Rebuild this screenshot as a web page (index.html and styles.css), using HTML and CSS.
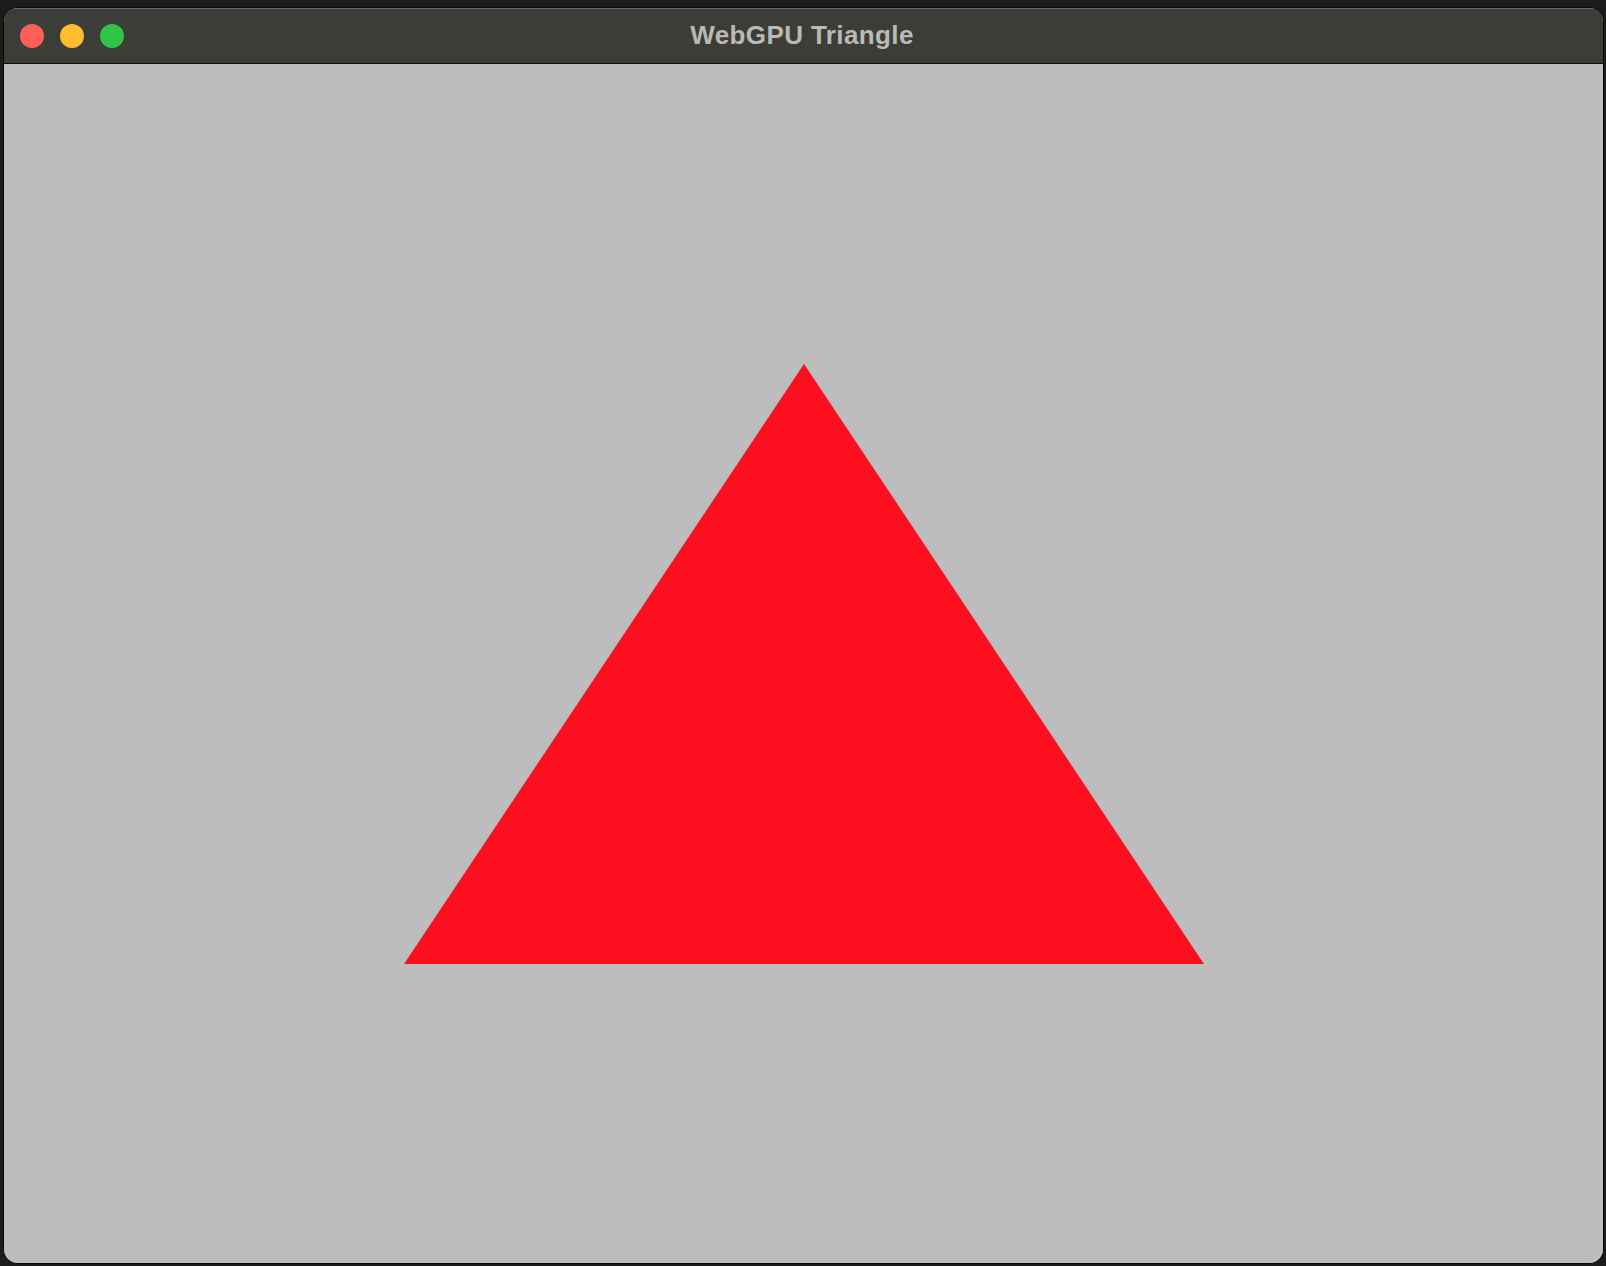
FILE: index.html
```html
<!DOCTYPE html>
<html lang="en">
<head>
<meta charset="utf-8">
<title>WebGPU Triangle</title>
<link rel="stylesheet" href="styles.css">
</head>
<body>
  <div class="window">
    <div class="titlebar">
      <div class="lights">
        <span class="light red"></span>
        <span class="light yellow"></span>
        <span class="light green"></span>
      </div>
      <div class="title">WebGPU Triangle</div>
    </div>
    <div class="content">
      <svg class="canvas" viewBox="0 0 1600 1200" width="1600" height="1200">
        <polygon points="800,300 400,900 1200,900" fill="#fc1020"/>
      </svg>
    </div>
  </div>
</body>
</html>
```
FILE: styles.css
```css
html, body {
  margin: 0;
  padding: 0;
  background: #1c1c1c;
  height: 100%;
  overflow: hidden;
}

body {
  padding: 8px 3px 0 4px;
  box-sizing: border-box;
}

.window {
  width: 1599px;
  height: 1255px;
  border-radius: 14px;
  overflow: hidden;
  background: #bdbdbd;
  box-shadow: 0 0 0 1px #0a0a0a;
  display: flex;
  flex-direction: column;
}

.titlebar {
  position: relative;
  height: 54px;
  flex: none;
  background: #3c3d38;
  border-top: 1px solid #6b6c67;
  border-bottom: 1px solid #0c0c0c;
  display: flex;
  align-items: center;
  justify-content: center;
}

.lights {
  position: absolute;
  left: 16px;
  top: 15px;
  display: flex;
  gap: 16px;
}

.light {
  width: 24px;
  height: 24px;
  border-radius: 50%;
  display: block;
}

.red { background: #fe5f57; }
.yellow { background: #febc2e; }
.green { background: #2fc647; }

.title {
  font-family: "Liberation Sans", Arial, sans-serif;
  font-weight: bold;
  font-size: 26px;
  letter-spacing: 0.4px;
  color: #b9bab4;
  padding-bottom: 1px;
  padding-right: 3px;
}

.content {
  flex: 1;
  background: #bdbdbd;
  overflow: hidden;
}

.canvas {
  display: block;
}
```
